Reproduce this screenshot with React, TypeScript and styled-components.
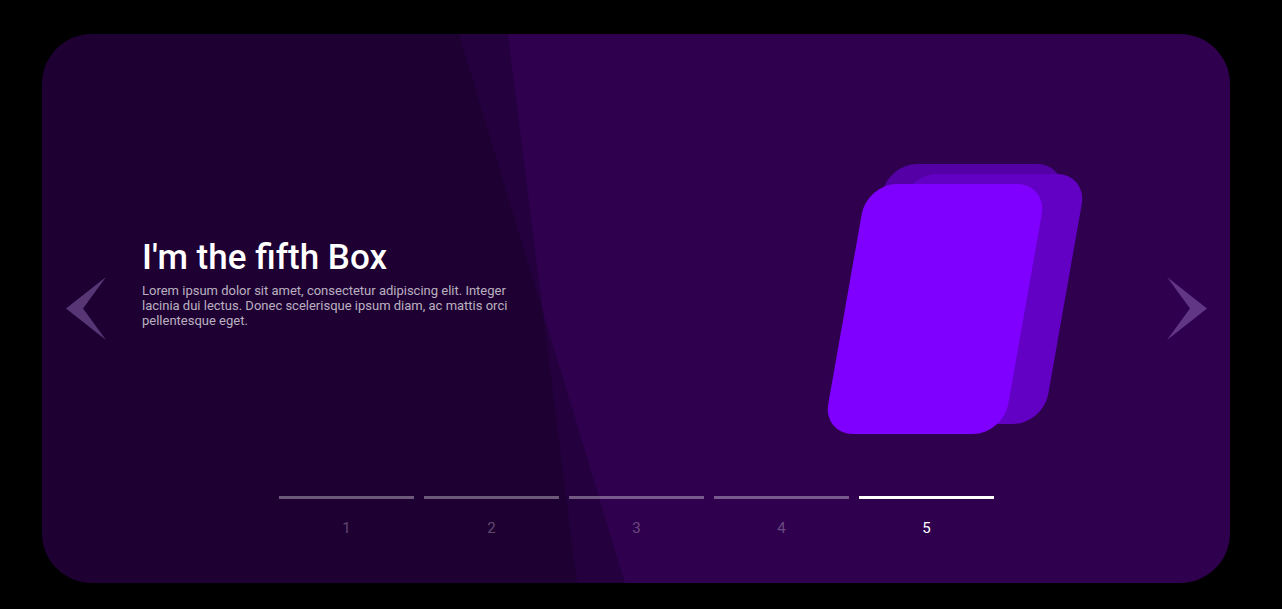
import { FunctionComponent } from "react";
import styled, { createGlobalStyle } from "styled-components";

const GlobalStyle = createGlobalStyle`
  html, body {
    margin: 0;
    padding: 0;
    background: #000;
    font-family: Roboto, "Liberation Sans", Arial, sans-serif;
  }
`;

const slides = [1, 2, 3, 4, 5];
const active = 5;

const Arrow: FunctionComponent<{ dir: "left" | "right" }> = ({ dir }) => (
  <ArrowButton aria-label={dir === "left" ? "Previous" : "Next"} $dir={dir}>
    <svg width="40" height="63" viewBox="0 0 40 63">
      {dir === "left" ? (
        <polygon points="40,0 0,31.5 40,63 17,31.5" />
      ) : (
        <polygon points="0,0 40,31.5 0,63 23,31.5" />
      )}
    </svg>
  </ArrowButton>
);

const App: FunctionComponent = () => (
  <Page>
    <GlobalStyle />
    <Slider>
      <Decor viewBox="0 0 1188 549" preserveAspectRatio="none">
        <polygon points="0,0 417,0 583,549 0,549" />
        <polygon points="0,0 466,0 535,549 0,549" />
      </Decor>
      <Arrow dir="left" />
      <Caption>
        <Title>I'm the fifth Box</Title>
        <Text>
          Lorem ipsum dolor sit amet, consectetur adipiscing elit. Integer
          lacinia dui lectus. Donec scelerisque ipsum diam, ac mattis orci
          pellentesque eget.
        </Text>
      </Caption>
      <Stack>
        <StackCard $x={20} $y={-20} $color="#5400a6" />
        <StackCard $x={40} $y={-10} $color="#6200c4" />
        <StackCard $x={0} $y={0} $color="#8000ff" />
      </Stack>
      <Arrow dir="right" />
      <Pagination>
        {slides.map((n) => (
          <Dot key={n} $active={n === active}>
            <Bar $active={n === active} />
            <Label>{n}</Label>
          </Dot>
        ))}
      </Pagination>
    </Slider>
  </Page>
);

const Page = styled.div`
  padding: 34px 0 0 42px;
`;

const Slider = styled.div`
  position: relative;
  box-sizing: border-box;
  width: 1188px;
  height: 549px;
  border-radius: 50px;
  background: #2e004e;
  overflow: hidden;
  display: flex;
  align-items: center;
  padding: 0 23px 0 24px;
`;

const Decor = styled.svg`
  position: absolute;
  inset: 0;
  width: 100%;
  height: 100%;
  z-index: 0;

  polygon {
    fill: rgba(0, 0, 0, 0.19);
  }
`;

const ArrowButton = styled.button<{ $dir: "left" | "right" }>`
  position: relative;
  z-index: 1;
  flex: none;
  width: 40px;
  height: 63px;
  padding: 0;
  border: 0;
  background: none;
  cursor: pointer;
  margin-left: ${(p) => (p.$dir === "right" ? "auto" : "0")};

  svg {
    display: block;
  }

  polygon {
    fill: rgba(160, 120, 200, 0.45);
  }
`;

const Caption = styled.div`
  position: relative;
  z-index: 1;
  flex: none;
  width: 370px;
  margin-left: 36px;
  margin-bottom: 52px;
`;

const Title = styled.h2`
  margin: 0 0 4px;
  font-size: 35px;
  line-height: 42px;
  font-weight: 500;
  color: #fff;
`;

const Text = styled.p`
  margin: 0;
  font-size: 13px;
  line-height: 15px;
  color: rgba(255, 255, 255, 0.7);
`;

const Stack = styled.div`
  position: relative;
  z-index: 1;
  flex: none;
  width: 180px;
  height: 250px;
  margin-left: 333px;
`;

const StackCard = styled.div<{ $x: number; $y: number; $color: string }>`
  position: absolute;
  inset: 0;
  border-radius: 30px;
  background: ${(p) => p.$color};
  transform: translate(${(p) => p.$x}px, ${(p) => p.$y}px) skewX(-10deg);
`;

const Pagination = styled.div`
  position: absolute;
  z-index: 1;
  left: 1px;
  right: 0;
  top: 462px;
  display: flex;
  justify-content: center;
  gap: 10px;
`;

const Dot = styled.div<{ $active: boolean }>`
  width: 135px;
  display: flex;
  flex-direction: column;
  align-items: center;
  color: ${(p) => (p.$active ? "#fff" : "rgba(255, 255, 255, 0.3)")};
`;

const Bar = styled.div<{ $active: boolean }>`
  width: 100%;
  height: 3px;
  background: ${(p) => (p.$active ? "#fff" : "rgba(255, 255, 255, 0.35)")};
`;

const Label = styled.span`
  margin-top: 20px;
  font-size: 15px;
  line-height: 18px;
`;

export default App;
